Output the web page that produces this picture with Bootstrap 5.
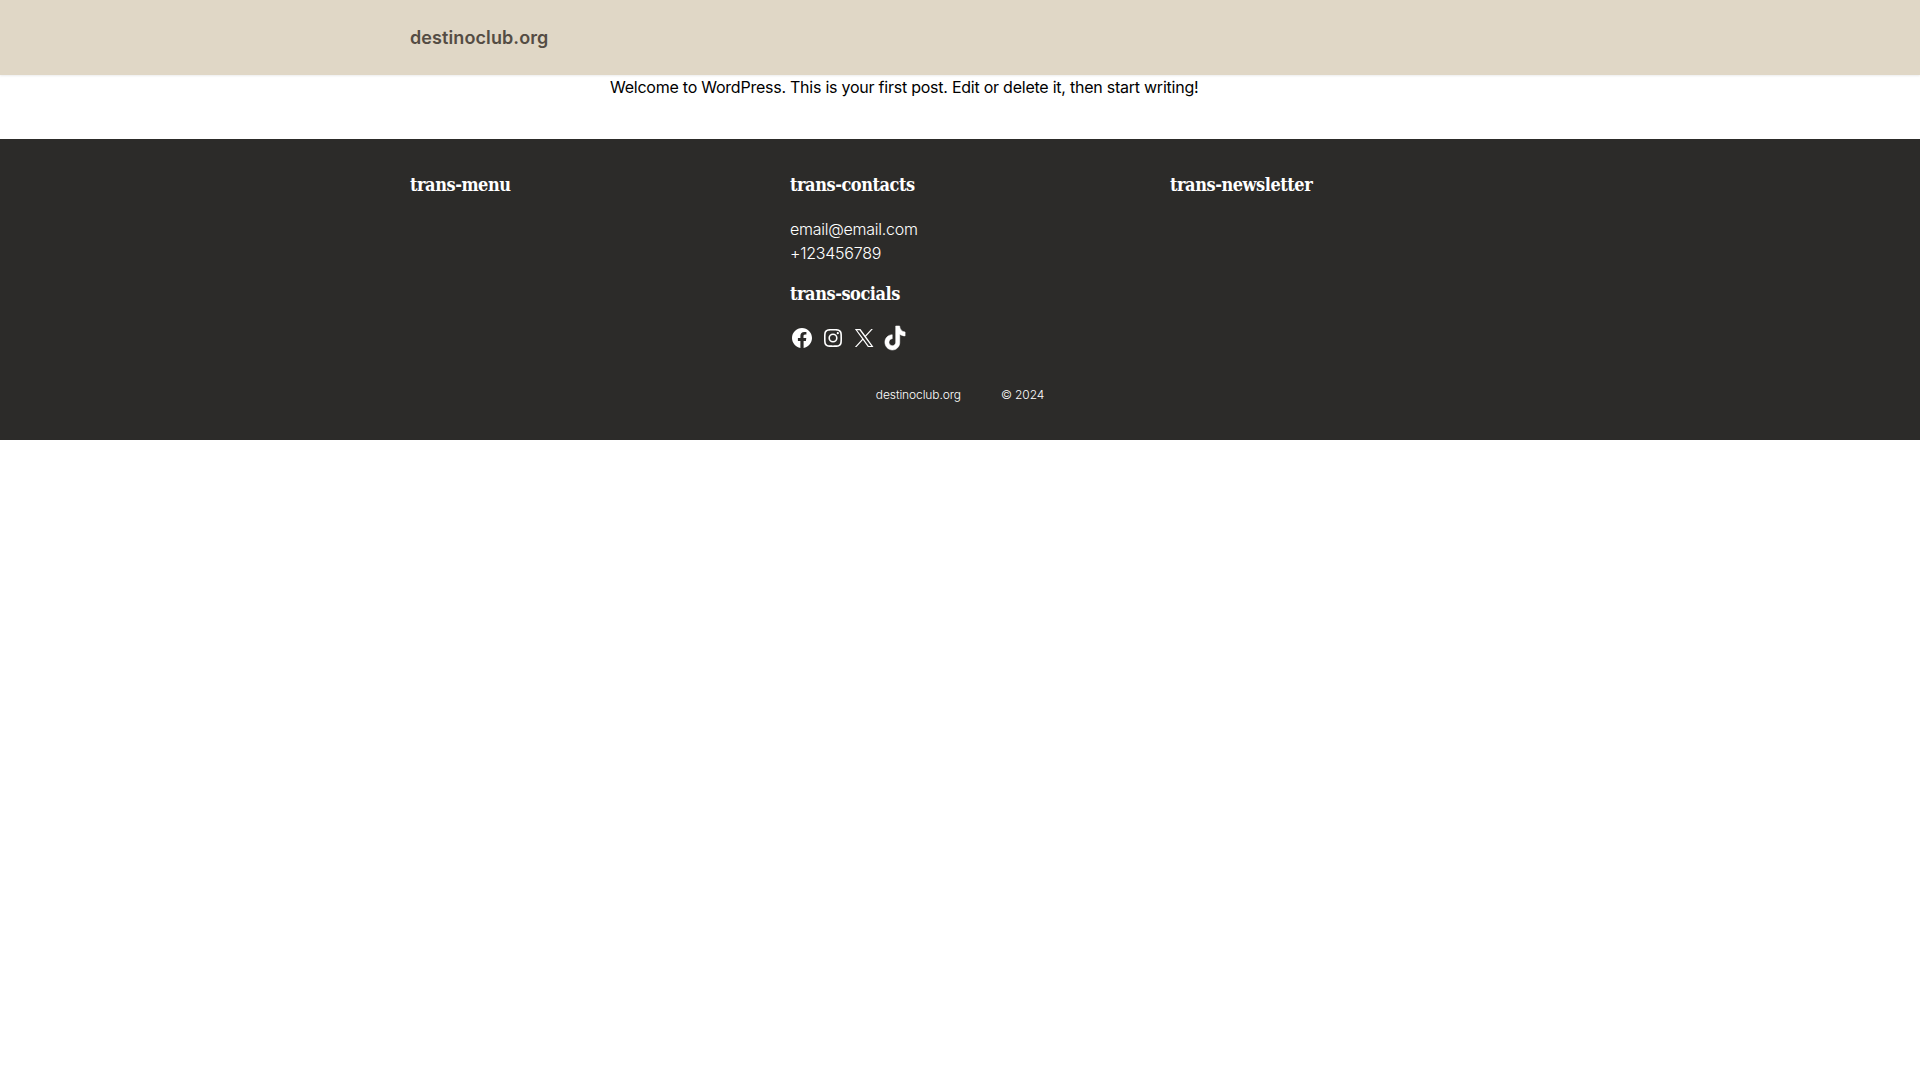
<!DOCTYPE html>
<html lang="en">
  <head>
    <meta charset="UTF-8" />
    <title>destinoclub.org</title>
    <link href="https://cdn.jsdelivr.net/npm/bootstrap@5.3.0/dist/css/bootstrap.min.css" rel="stylesheet" />
    <style>
      body { font-family: Inter, "Noto Sans", sans-serif; color: #000; background: #fff; }
      .wrap { width: 1100px; gap: 40px; }
      .site-header { background: #e0d7c6; height: 75px; box-shadow: 0 1px 2px rgba(0,0,0,.08); }
      .site-title { font-size: 18px; font-weight: 600; color: #544c44; text-decoration: none; letter-spacing: .1px; }
      .post { width: 700px; height: 64px; font-size: 16px; line-height: 24px; letter-spacing: -.24px; }
      .site-footer { background: #2c2b29; color: #fff; height: 301px; padding-top: 31px; }
      .footer-title { font-family: "DejaVu Serif Condensed", "DejaVu Serif", serif; font-weight: 700; font-size: 18px; line-height: 29px; letter-spacing: -.45px; margin: 0; }
      .col-foot { width: 340px; }
      .contact { font-size: 16px; line-height: 24px; margin: 18px 0 14px; letter-spacing: -.25px; font-weight: 300; }
      .socials { margin-top: 18px; gap: 7px; }
      .socials svg { width: 24px; height: 24px; display: block; fill: #fff; overflow: visible; }
      .socials .tiktok { stroke: #fff; stroke-width: .5px; }
      .copy { font-size: 12px; font-weight: 300; gap: 40px; margin-top: 36px; letter-spacing: -.1px; }
    </style>
  </head>
  <body>
    <header class="site-header d-flex align-items-center">
      <div class="wrap mx-auto">
        <a class="site-title" href="#">destinoclub.org</a>
      </div>
    </header>

    <main class="post mx-auto">
      <p class="m-0">Welcome to WordPress. This is your first post. Edit or delete it, then start writing!</p>
    </main>

    <footer class="site-footer">
      <div class="wrap mx-auto d-flex">
        <div class="col-foot">
          <h2 class="footer-title">trans-menu</h2>
        </div>
        <div class="col-foot">
          <h2 class="footer-title">trans-contacts</h2>
          <div class="contact">email@email.com<br />+123456789</div>
          <h2 class="footer-title">trans-socials</h2>
          <div class="socials d-flex">
            <svg viewBox="0 0 24 24"><path d="M12 2C6.500 2 2 6.500 2 12c0 5 3.700 9.100 8.400 9.900v-7H7.900V12h2.500V9.800c0-2.500 1.500-3.900 3.800-3.900 1.100 0 2.200.2 2.200.2v2.500h-1.300c-1.200 0-1.600.8-1.600 1.600V12h2.800l-.4 2.900h-2.300v7C18.300 21.100 22 17 22 12c0-5.500-4.500-10-10-10z"/></svg>
            <svg viewBox="0 0 24 24"><path d="M12 4.600c2.400 0 2.700 0 3.600.1.900 0 1.400.2 1.700.3.400.2.700.4 1 .7.300.3.500.6.700 1 .1.300.3.800.3 1.700.1 1 .1 1.200.1 3.600s0 2.700-.1 3.600c0 .9-.2 1.400-.3 1.700-.2.400-.4.700-.7 1-.3.300-.6.500-1 .7-.3.100-.8.300-1.700.3-1 .1-1.200.1-3.600.1s-2.700 0-3.600-.1c-.9 0-1.400-.2-1.700-.3-.4-.2-.7-.4-1-.7-.3-.3-.5-.6-.7-1-.1-.3-.3-.8-.3-1.700-.1-1-.1-1.200-.1-3.600s0-2.700.1-3.600c0-.9.2-1.400.3-1.700.2-.4.4-.7.7-1 .3-.3.6-.5 1-.7.3-.1.8-.3 1.700-.3 1-.1 1.200-.1 3.600-.1M12 3c-2.400 0-2.800 0-3.700.1-1 0-1.600.2-2.200.4-.6.2-1.100.5-1.600 1-.5.5-.8 1-1 1.600-.2.6-.4 1.200-.4 2.200C3 9.200 3 9.600 3 12s0 2.800.1 3.700c0 1 .2 1.600.4 2.200.2.6.5 1.100 1 1.600.5.5 1 .8 1.600 1 .6.2 1.200.4 2.200.4.9.1 1.300.1 3.700.1s2.800 0 3.700-.1c1 0 1.600-.2 2.200-.4.6-.2 1.100-.5 1.600-1 .5-.5.8-1 1-1.600.2-.6.4-1.200.4-2.200.1-.9.1-1.300.1-3.700s0-2.800-.1-3.700c0-1-.2-1.600-.4-2.200-.2-.6-.5-1.100-1-1.600-.5-.5-1-.8-1.600-1-.6-.2-1.200-.4-2.200-.4C14.800 3 14.400 3 12 3zm0 4.400a4.600 4.600 0 1 0 0 9.200 4.600 4.600 0 0 0 0-9.200zm0 7.600a3 3 0 1 1 0-6 3 3 0 0 1 0 6zm4.800-8.900a1.100 1.100 0 1 0 0 2.200 1.100 1.100 0 0 0 0-2.200z"/></svg>
            <svg viewBox="0 0 24 24"><path d="M13.980 10.620 20.900 3h-1.640l-6 6.600L8.470 3H2.900l7.260 10.070L2.900 21h1.640l6.350-6.980L15.930 21h5.570l-7.520-10.380zm-2.250 2.470-.74-1L5.100 4.200h2.530l4.730 6.450.73 1 6.160 8.400h-2.520l-5-6.960z"/></svg>
            <svg class="tiktok" viewBox="1.450 1 22 22"><path d="M16.700 1h-3.600v14.900c0 1.800-1.400 3.200-3.100 3.200s-3.100-1.400-3.100-3.200c0-1.700 1.400-3.100 3-3.200V9c-3.800.1-6.700 3.100-6.700 6.900C3.200 19.700 6.300 23 10 23c3.800 0 6.800-3.100 6.800-6.900V8.500c1.400 1 3.100 1.600 4.900 1.600V6.500C19 6.400 16.800 4 16.700 1z"/></svg>
          </div>
        </div>
        <div class="col-foot">
          <h2 class="footer-title">trans-newsletter</h2>
        </div>
      </div>
      <div class="copy d-flex justify-content-center">
        <span>destinoclub.org</span>
        <span>© 2024</span>
      </div>
    </footer>

    <script src="https://cdn.jsdelivr.net/npm/bootstrap@5.3.0/dist/js/bootstrap.bundle.min.js"></script>
  </body>
</html>
